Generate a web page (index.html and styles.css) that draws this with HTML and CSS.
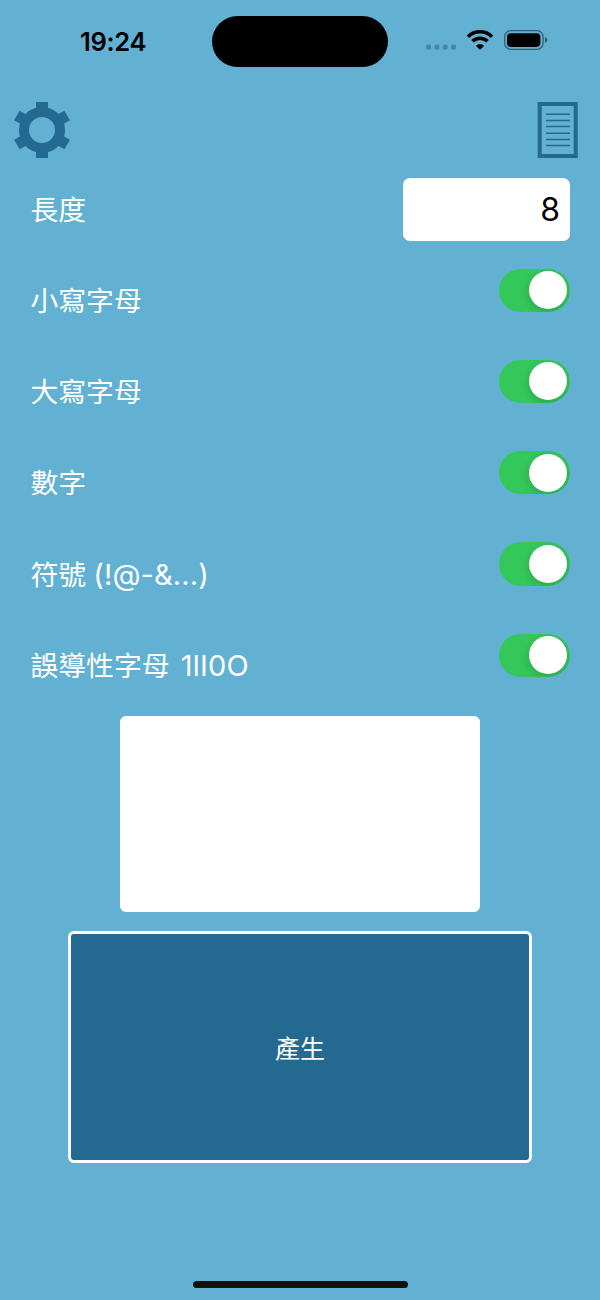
FILE: index.html
```
<!DOCTYPE html>
<html lang="zh-TW">

<head>
    <meta charset="UTF-8">
    <meta name="viewport" content="width=device-width, initial-scale=1.0">
    <title>密碼產生器</title>
    <link rel="stylesheet" href="styles.css">
</head>

<body>
    <div class="screen">
        <div class="status-bar">
            <div class="time">19:24</div>
            <div class="island"></div>
            <div class="status-icons">
                <svg class="dots" width="32" height="6" viewBox="0 0 32 6">
                    <rect x="0" y="0.5" width="5" height="5" rx="1.6" />
                    <rect x="8.3" y="0.5" width="5" height="5" rx="1.6" />
                    <rect x="16.7" y="0.5" width="5" height="5" rx="1.6" />
                    <rect x="25" y="0.5" width="5" height="5" rx="1.6" />
                </svg>
                <svg class="wifi" width="28" height="20" viewBox="0 0 28 20">
                    <path d="M1.9 6.7 A17.3 17.3 0 0 1 26.1 6.7" fill="none" stroke="#000" stroke-width="3.6" />
                    <path d="M6.5 11.3 A10.8 10.8 0 0 1 21.5 11.3" fill="none" stroke="#000" stroke-width="3.5" />
                    <path d="M14 19.8 L9.9 15.7 A6 6 0 0 1 18.1 15.7 Z" />
                </svg>
                <svg class="battery" width="44" height="20" viewBox="0 0 44 20">
                    <rect x="0.7" y="0.7" width="38.4" height="18.6" rx="6" fill="none" stroke="#000" stroke-opacity="0.45" stroke-width="1.3" />
                    <rect x="3" y="3.3" width="33.4" height="13.6" rx="3.8" />
                    <path d="M41 7 Q43.3 7.9 43.3 10 Q43.3 12.1 41 13 Z" fill-opacity="0.5" />
                </svg>
            </div>
        </div>

        <div class="toolbar">
            <svg class="icon-gear" width="58" height="56" viewBox="-29 -28 58 56">
                <circle r="18" fill="none" stroke="#24698f" stroke-width="10" />
                <g fill="#24698f">
                    <rect x="-6" y="-28" width="12" height="8" />
                    <rect x="-5.5" y="-29" width="11" height="9" transform="rotate(60)" />
                    <rect x="-5.5" y="-29" width="11" height="9" transform="rotate(120)" />
                    <rect x="-6" y="-28" width="12" height="8" transform="rotate(180)" />
                    <rect x="-5.5" y="-29" width="11" height="9" transform="rotate(240)" />
                    <rect x="-5.5" y="-29" width="11" height="9" transform="rotate(300)" />
                </g>
            </svg>
            <svg class="icon-doc" width="41" height="56" viewBox="0 0 41 56">
                <rect x="2.7" y="2" width="36" height="52" fill="none" stroke="#24698f" stroke-width="4" />
                <path d="M9 12.3H33M9 18.5H33M9 24.6H33M9 31.2H33M9 37.4H33M9 43.6H33" stroke="#24698f" stroke-width="1.5" />
            </svg>
        </div>

        <div class="options">
            <div class="row">
                <label for="length">長度</label>
                <input type="text" id="length" class="length" value="8">
            </div>
            <div class="row">
                <span class="label">小寫字母</span>
                <div class="switch"></div>
            </div>
            <div class="row">
                <span class="label">大寫字母</span>
                <div class="switch"></div>
            </div>
            <div class="row">
                <span class="label">數字</span>
                <div class="switch"></div>
            </div>
            <div class="row">
                <span class="label">符號 <span class="latin symbols">(!@-&amp;...)</span></span>
                <div class="switch"></div>
            </div>
            <div class="row">
                <span class="label">誤導性字母 <span class="latin similar">1lI0O</span></span>
                <div class="switch"></div>
            </div>
        </div>

        <div class="result"></div>
        <button type="button" class="btn-generate">產生</button>
        <div class="home-indicator"></div>
    </div>
</body>

</html>
```
FILE: styles.css
```
* {
    margin: 0;
    padding: 0;
    box-sizing: border-box;
}

body {
    background-color: #62b0d2;
    color: #fff;
    font-family: 'Noto Sans CJK TC', sans-serif;
}

.screen {
    display: flex;
    flex-direction: column;
    align-items: center;
    width: 600px;
    height: 1300px;
    overflow: hidden;
}

.status-bar {
    display: grid;
    grid-template-columns: 212.4px 175.2px 212.4px;
    width: 100%;
    height: 102px;
    padding-top: 15.7px;
    align-items: start;
    color: #000;
}

.time {
    padding: 9.9px 0 0 80px;
    font-family: Inter, sans-serif;
    font-size: 25.5px;
    font-weight: 600;
    line-height: 31px;
    letter-spacing: -0.3px;
}

.island {
    height: 51.6px;
    border-radius: 26px;
    background-color: #000;
}

.status-icons {
    display: flex;
    align-items: flex-start;
    padding: 14.8px 0 0 38px;
}

.dots {
    margin-top: 14px;
    opacity: 0.22;
}

.wifi {
    margin-left: 8px;
}

.battery {
    margin-left: 10px;
}

.toolbar {
    display: flex;
    justify-content: space-between;
    width: 100%;
    height: 56px;
    padding: 0 22px 0 13px;
}

.options {
    display: flex;
    flex-direction: column;
    gap: 28.25px;
    width: 100%;
    padding: 19.6px 30px 0 30.5px;
}

.row {
    display: flex;
    justify-content: space-between;
    align-items: flex-start;
    height: 63px;
    font-size: 27.8px;
    line-height: 61px;
    white-space: nowrap;
}

.latin {
    font-family: Inter, sans-serif;
    font-size: 29px;
    font-weight: 400;
}

.symbols {
    margin-left: 1px;
    letter-spacing: 0.1px;
}

.similar {
    margin-left: 5px;
    letter-spacing: 0.2px;
}

.length {
    width: 167px;
    height: 63px;
    padding-right: 10px;
    border: none;
    border-radius: 7px;
    background-color: #fff;
    font-family: Inter, sans-serif;
    font-size: 32px;
    text-align: right;
    color: #000;
}

.switch {
    width: 71px;
    height: 43.4px;
    padding: 2.7px;
    margin-top: -0.3px;
    border-radius: 22px;
    background-color: #34c759;
    overflow: hidden;
}

.switch::after {
    content: "";
    display: block;
    width: 38px;
    height: 38px;
    margin-left: auto;
    border-radius: 50%;
    background-color: #fff;
    box-shadow: 0 3px 8px rgba(0, 0, 0, 0.17);
}

.result {
    width: 360px;
    height: 195.4px;
    margin-top: 19.4px;
    border-radius: 6px;
    background-color: #fff;
}

.btn-generate {
    width: 464px;
    height: 232px;
    margin-top: 19.4px;
    border: 3px solid #fff;
    border-radius: 6px;
    background-color: #24698f;
    color: #fff;
    font-family: 'Noto Sans CJK TC', sans-serif;
    font-size: 25px;
}

.home-indicator {
    width: 215px;
    height: 7px;
    margin-top: 118.4px;
    border-radius: 4px;
    background-color: #111;
}
```
